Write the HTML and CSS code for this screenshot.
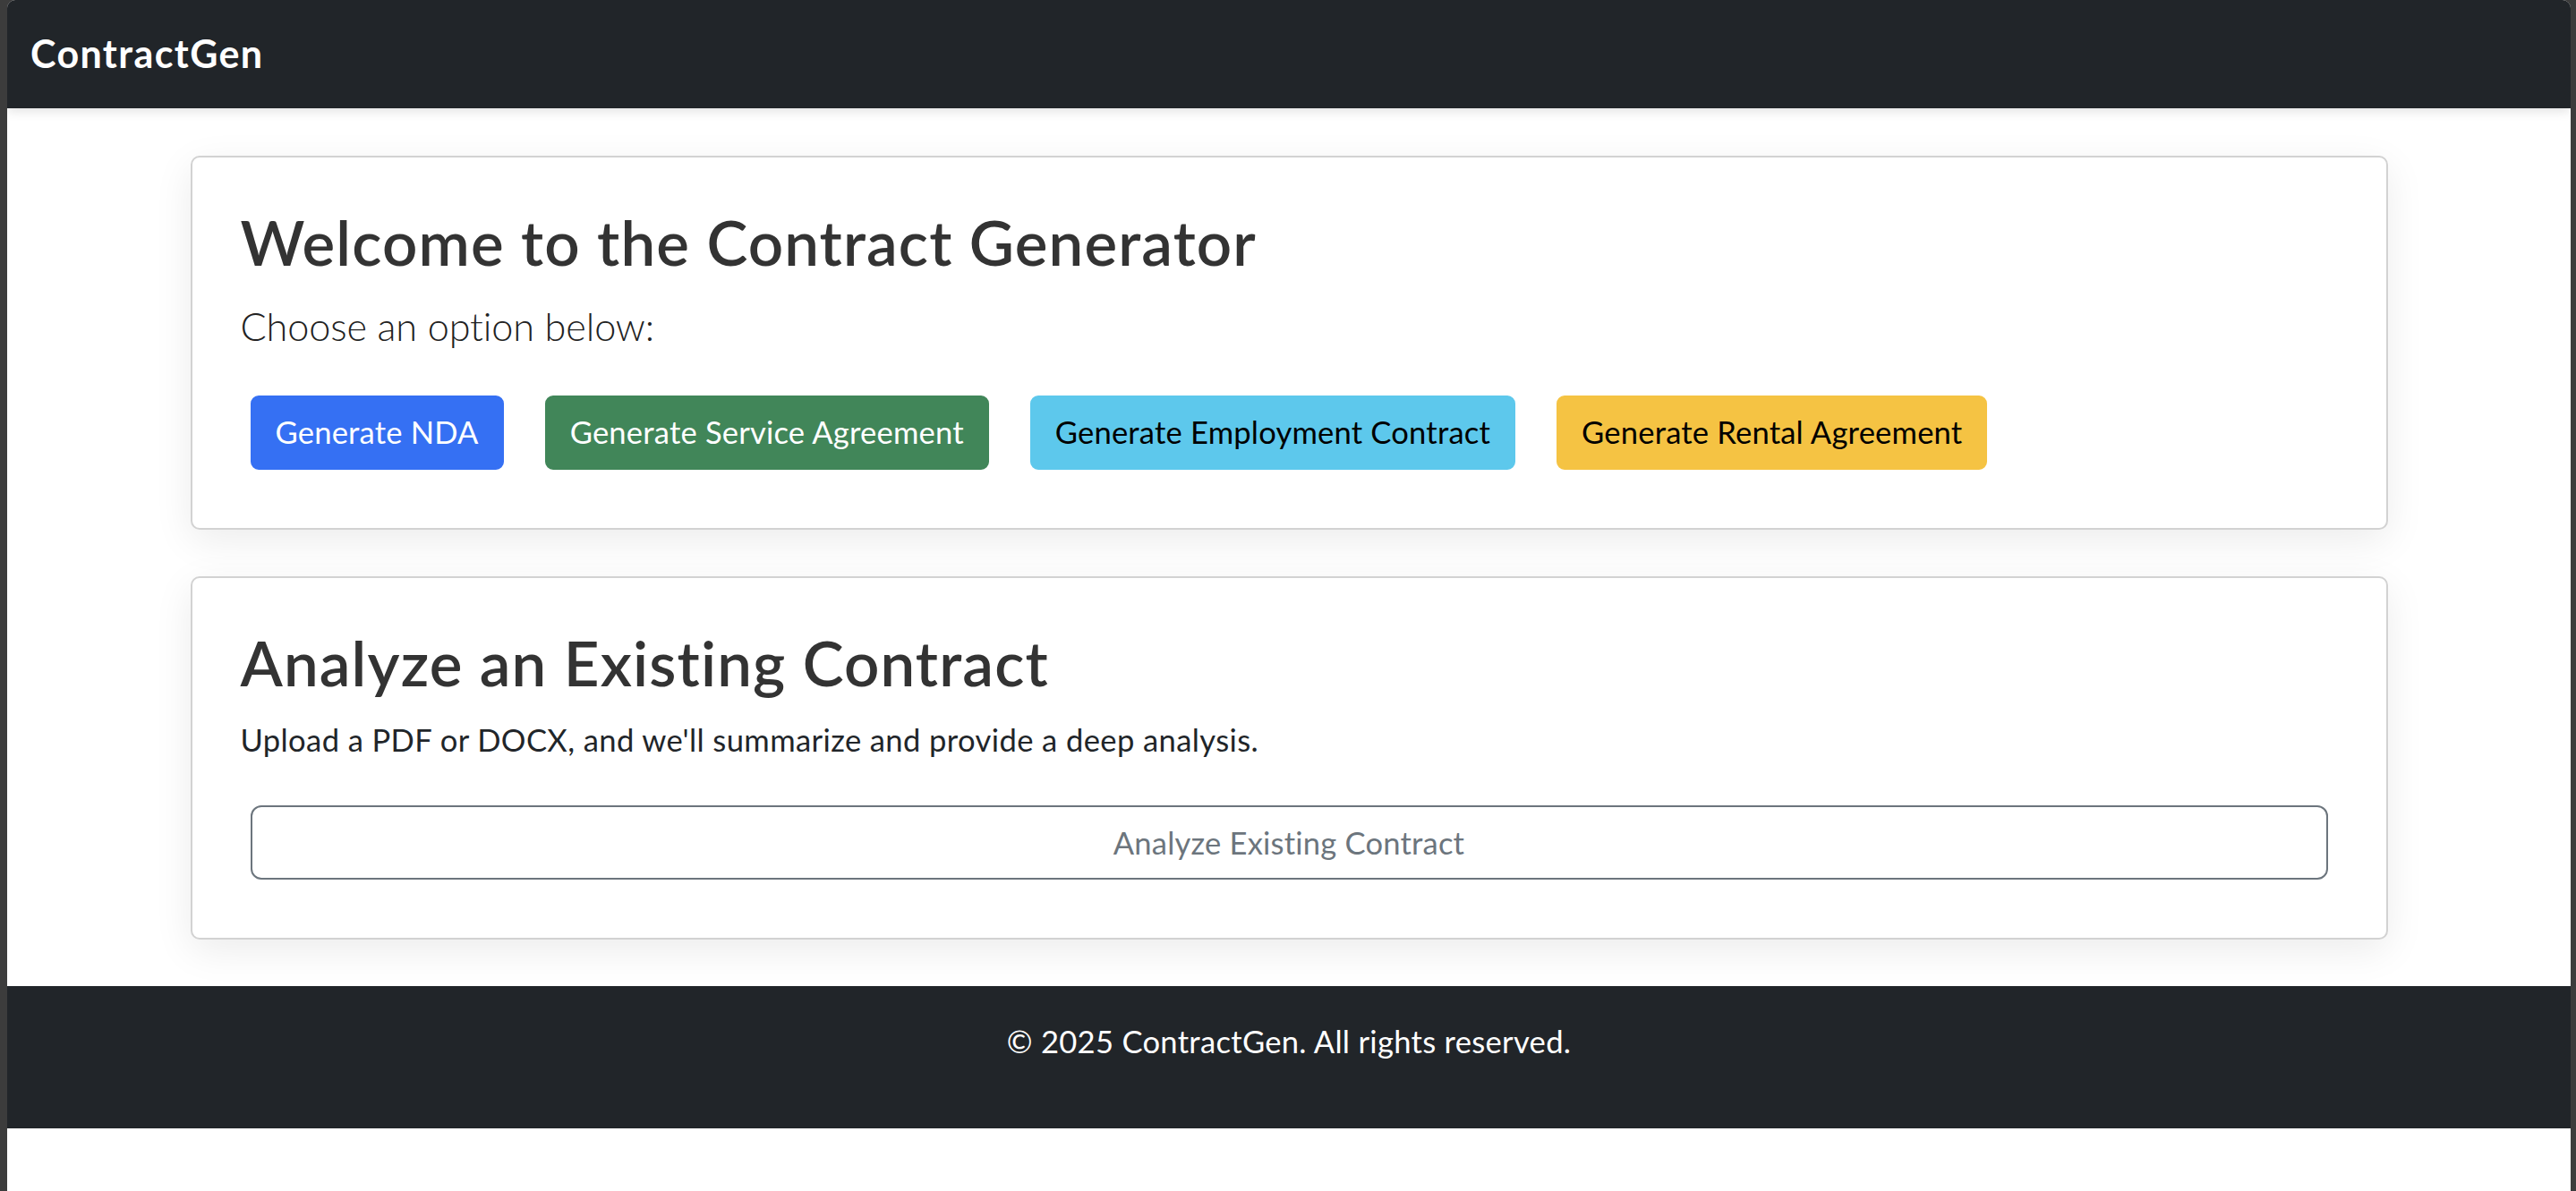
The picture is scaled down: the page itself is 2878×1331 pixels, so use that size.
FILE: index.html
```html
<!DOCTYPE html>
<html lang="en">
<head>
<meta charset="utf-8">
<title>ContractGen</title>
<link rel="stylesheet" href="styles.css">
</head>
<body>
<div class="window">
  <nav class="navbar">
    <a class="brand" href="#">ContractGen</a>
  </nav>
  <main class="container">
    <section class="card">
      <h2 class="title">Welcome to the Contract Generator</h2>
      <p class="lead">Choose an option below:</p>
      <div class="actions">
        <a class="btn btn-primary" href="#">Generate NDA</a>
        <a class="btn btn-success" href="#">Generate Service Agreement</a>
        <a class="btn btn-info" href="#">Generate Employment Contract</a>
        <a class="btn btn-warning" href="#">Generate Rental Agreement</a>
      </div>
    </section>
    <section class="card">
      <h2 class="title">Analyze an Existing Contract</h2>
      <p class="desc">Upload a PDF or DOCX, and we'll summarize and provide a deep analysis.</p>
      <div class="actions">
        <a class="btn btn-outline" href="#">Analyze Existing Contract</a>
      </div>
    </section>
  </main>
  <footer class="footer">
    <p class="copy">© 2025 ContractGen. All rights reserved.</p>
  </footer>
</div>
</body>
</html>
```
FILE: styles.css
```css
html, body {
  margin: 0;
  padding: 0;
}
body {
  background: #3c3c3c;
  font-family: Lato, "Open Sans", sans-serif;
  color: #212529;
}
.window {
  margin: 0 6px 0 8px;
  min-height: 1331px;
  background: #ffffff;
  border-radius: 9px 9px 0 0;
  overflow: hidden;
  display: flex;
  flex-direction: column;
}
.navbar {
  position: relative;
  z-index: 2;
  height: 121px;
  background: #212529;
  display: flex;
  align-items: center;
  padding: 0 26px;
  box-shadow: 0 3px 12px rgba(0, 0, 0, 0.12);
}
.brand {
  color: #ffffff;
  text-decoration: none;
  font-weight: 700;
  font-size: 43px;
  line-height: 1.5;
  letter-spacing: 1.4px;
}
.container {
  width: 2455px;
  margin: 53px auto 0;
  display: flex;
  flex-direction: column;
  gap: 52px;
}
.card {
  border: 2px solid #d2d2d2;
  border-radius: 10px;
  background: #ffffff;
  padding: 54px;
  box-shadow: 0 12px 44px rgba(0, 0, 0, 0.08);
}
.title {
  margin: 0 0 19px;
  font-size: 69px;
  font-weight: 600;
  line-height: 1.2;
  color: #333333;
  letter-spacing: 1.15px;
}
.lead {
  margin: 0;
  font-size: 43.2px;
  font-weight: 300;
  line-height: 1.5;
  color: #222222;
  letter-spacing: -0.1px;
}
.desc {
  margin: 0;
  font-size: 34.56px;
  line-height: 1.5;
  color: #212529;
  letter-spacing: 0.4px;
}
.actions {
  display: flex;
  gap: 46px;
  padding: 0 11px;
  margin: 45px 0 11px;
}
.card .desc + .actions {
  margin-top: 47px;
}
.btn {
  display: inline-block;
  box-sizing: border-box;
  height: 83px;
  padding: 13.5px 26px;
  border: 2px solid transparent;
  border-radius: 9px;
  font-size: 34.56px;
  line-height: 1.5;
  text-decoration: none;
  text-align: center;
  white-space: nowrap;
  letter-spacing: 0.2px;
}
.btn-primary {
  background: #3570f3;
  border-color: #3570f3;
  color: #ffffff;
}
.btn-success {
  background: #418659;
  border-color: #418659;
  color: #ffffff;
}
.btn-info {
  background: #5dc8ec;
  border-color: #5dc8ec;
  color: #000000;
}
.btn-warning {
  background: #f5c343;
  border-color: #f5c343;
  color: #000000;
}
.btn-outline {
  flex: 1;
  background: #ffffff;
  border-color: #6c757d;
  color: #6c757d;
  border-radius: 12px;
}
.footer {
  margin-top: 52px;
  background: #212529;
  padding: 36px 26px;
  text-align: center;
}
.copy {
  margin: 0 0 34.56px;
  color: #ffffff;
  font-size: 34.56px;
  line-height: 1.5;
  letter-spacing: 0.3px;
}
```
